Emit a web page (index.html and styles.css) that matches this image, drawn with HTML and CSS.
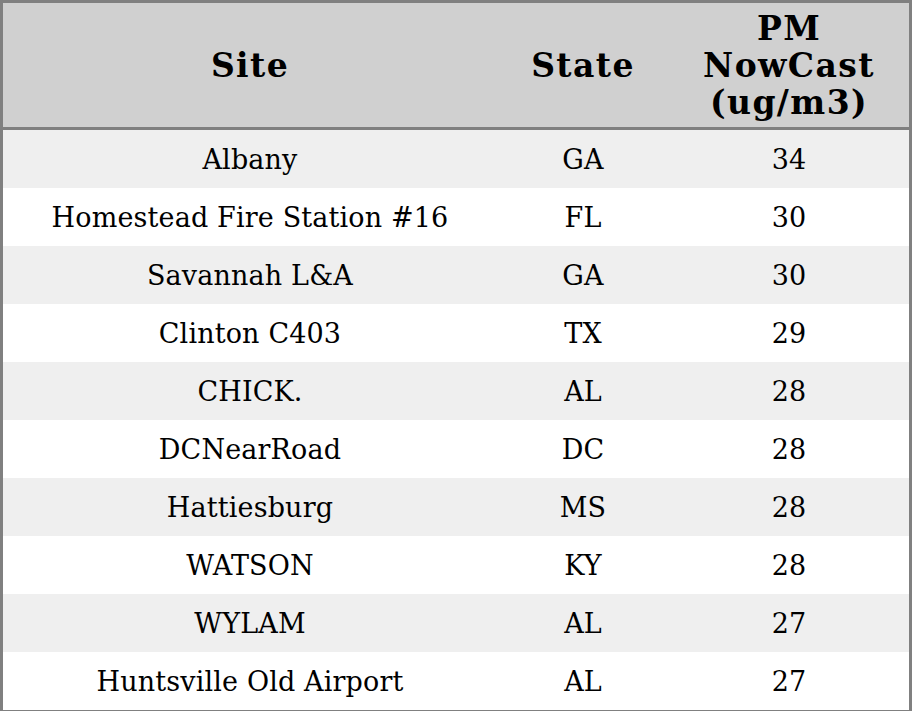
FILE: index.html
```html
<!DOCTYPE html>
<html>
<head>
<meta charset="utf-8">
<link rel="stylesheet" href="styles.css">
</head>
<body>
<table class="grid">
  <thead>
    <tr><th class="c-site">Site</th><th class="c-state">State</th><th class="c-pm">PM<br>NowCast<br>(ug/m3)</th></tr>
  </thead>
  <tbody>
    <tr><td>Albany</td><td>GA</td><td>34</td></tr>
    <tr><td>Homestead Fire Station #16</td><td>FL</td><td>30</td></tr>
    <tr><td>Savannah L&amp;A</td><td>GA</td><td>30</td></tr>
    <tr><td>Clinton C403</td><td>TX</td><td>29</td></tr>
    <tr><td>CHICK.</td><td>AL</td><td>28</td></tr>
    <tr><td>DCNearRoad</td><td>DC</td><td>28</td></tr>
    <tr><td>Hattiesburg</td><td>MS</td><td>28</td></tr>
    <tr><td>WATSON</td><td>KY</td><td>28</td></tr>
    <tr><td>WYLAM</td><td>AL</td><td>27</td></tr>
    <tr><td>Huntsville Old Airport</td><td>AL</td><td>27</td></tr>
  </tbody>
</table>
</body>
</html>
```
FILE: styles.css
```css
html, body {
  margin: 0;
  padding: 0;
  background: #ffffff;
}
.grid {
  width: 912px;
  height: 711px;
  border-collapse: collapse;
  border: 3px solid #808080;
  font-family: "DejaVu Serif", serif;
  color: #000;
  box-sizing: border-box;
}
.grid th {
  background: #d0d0d0;
  font-size: 33px;
  font-weight: bold;
  letter-spacing: 1.4px;
  line-height: 37px;
  height: 124px;
  padding: 0;
  text-align: center;
  border-bottom: 3px solid #808080;
}
.c-site { width: 494px; }
.c-state { width: 172px; }
.grid td {
  font-size: 27px;
  letter-spacing: 0.15px;
  text-align: center;
  padding: 0;
  height: 58px;
}
.grid tbody tr:nth-child(odd) td {
  background: #efefef;
}
```
